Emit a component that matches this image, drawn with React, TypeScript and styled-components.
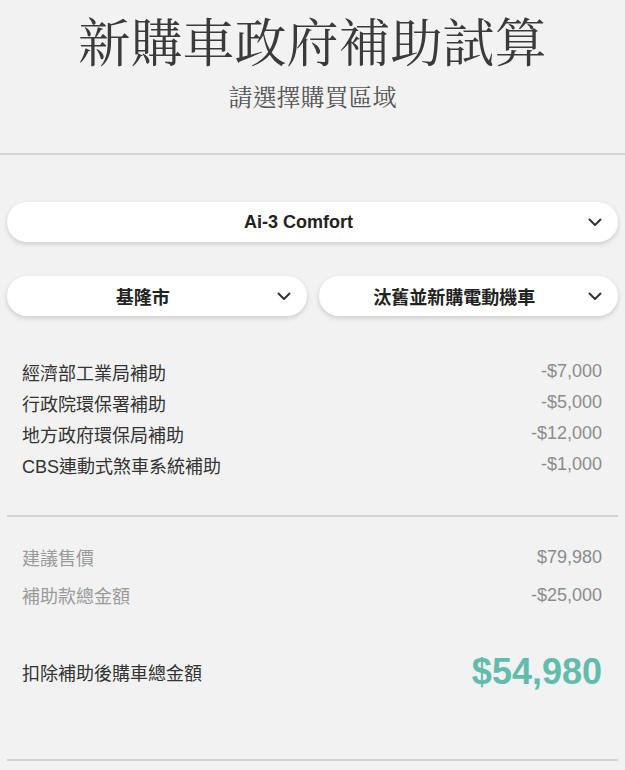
import React from "react";
import styled, { createGlobalStyle } from "styled-components";

const Global = createGlobalStyle`
  html, body { margin: 0; padding: 0; background: #f2f2f2; }
  body { font-family: "Liberation Sans", "Noto Sans CJK TC", sans-serif; color: #333; }
`;

const Page = styled.div`
  width: 625px;
  min-height: 770px;
  background: #f2f2f2;
`;

const Header = styled.header`
  padding-top: 5px;
  padding-bottom: 41px;
  text-align: center;
`;

const Title = styled.h1`
  margin: 0;
  font-family: "Noto Serif CJK TC", "Noto Sans CJK TC", serif;
  font-weight: 400;
  font-size: 52px;
  line-height: 70px;
  color: #3a3a3a;
`;

const Subtitle = styled.p`
  margin: 5px 0 0;
  font-family: "Noto Serif CJK TC", "Noto Sans CJK TC", serif;
  font-size: 24px;
  line-height: 32px;
  color: #555;
`;

const Rule = styled.hr<{ $inset?: boolean }>`
  border: none;
  height: 2px;
  background: #d3d3d3;
  margin: 0 ${(p) => (p.$inset ? "7px" : "0")};
`;

const Selects = styled.div`
  padding: 47px 7px 0;
  display: flex;
  flex-direction: column;
  gap: 34px;
`;

const SelectRow = styled.div`
  display: grid;
  grid-template-columns: 1fr 1fr;
  gap: 12px;
`;

const SelectBox = styled.div`
  height: 40px;
  border-radius: 20px;
  background: #fff;
  box-shadow: 0 2px 5px rgba(0, 0, 0, 0.16);
  display: flex;
  align-items: center;
  padding: 0 16px;
  box-sizing: border-box;
`;

const SelectText = styled.span`
  flex: 1;
  text-align: center;
  font-family: "Liberation Sans", "Noto Sans CJK TC", sans-serif;
  font-weight: 700;
  font-size: 18px;
  color: #222;
  padding-right: 14px;
`;

const Chevron = () => (
  <svg width="14" height="9" viewBox="0 0 14 9" fill="none">
    <path d="M1.5 1.5 L7 7 L12.5 1.5" stroke="#333" strokeWidth="2" strokeLinecap="round" strokeLinejoin="round" />
  </svg>
);

const Select = ({ value }: { value: string }) => (
  <SelectBox>
    <SelectText>{value}</SelectText>
    <Chevron />
  </SelectBox>
);

const List = styled.div<{ $top: number; $bottom: number }>`
  padding: ${(p) => p.$top}px 23px ${(p) => p.$bottom}px 22px;
`;

const Row = styled.div<{ $h: number; $muted?: boolean; $gapTop?: number }>`
  display: flex;
  justify-content: space-between;
  align-items: center;
  height: ${(p) => p.$h}px;
  margin-top: ${(p) => p.$gapTop ?? 0}px;
  font-size: 18px;
  color: ${(p) => (p.$muted ? "#9a9a9a" : "#333")};
`;

const Value = styled.span`
  color: #8c8c8c;
  font-family: "Liberation Sans", sans-serif;
`;

const Total = styled.span`
  color: #62bcad;
  font-weight: 700;
  font-size: 36px;
  font-family: "Liberation Sans", sans-serif;
`;

const subsidies = [
  ["經濟部工業局補助", "-$7,000"],
  ["行政院環保署補助", "-$5,000"],
  ["地方政府環保局補助", "-$12,000"],
  ["CBS連動式煞車系統補助", "-$1,000"],
];

export default function App() {
  return (
    <Page>
      <Global />
      <Header>
        <Title>新購車政府補助試算</Title>
        <Subtitle>請選擇購買區域</Subtitle>
      </Header>
      <Rule />
      <Selects>
        <Select value="Ai-3 Comfort" />
        <SelectRow>
          <Select value="基隆市" />
          <Select value="汰舊並新購電動機車" />
        </SelectRow>
      </Selects>
      <List $top={40} $bottom={35}>
        {subsidies.map(([l, v]) => (
          <Row key={l} $h={31}>
            <span>{l}</span>
            <Value>{v}</Value>
          </Row>
        ))}
      </List>
      <Rule $inset />
      <List $top={21} $bottom={65}>
        <Row $h={38} $muted>
          <span>建議售價</span>
          <Value>$79,980</Value>
        </Row>
        <Row $h={38} $muted>
          <span>補助款總金額</span>
          <Value>-$25,000</Value>
        </Row>
        <Row $h={44} $gapTop={36}>
          <span>扣除補助後購車總金額</span>
          <Total>$54,980</Total>
        </Row>
      </List>
      <Rule $inset />
    </Page>
  );
}
